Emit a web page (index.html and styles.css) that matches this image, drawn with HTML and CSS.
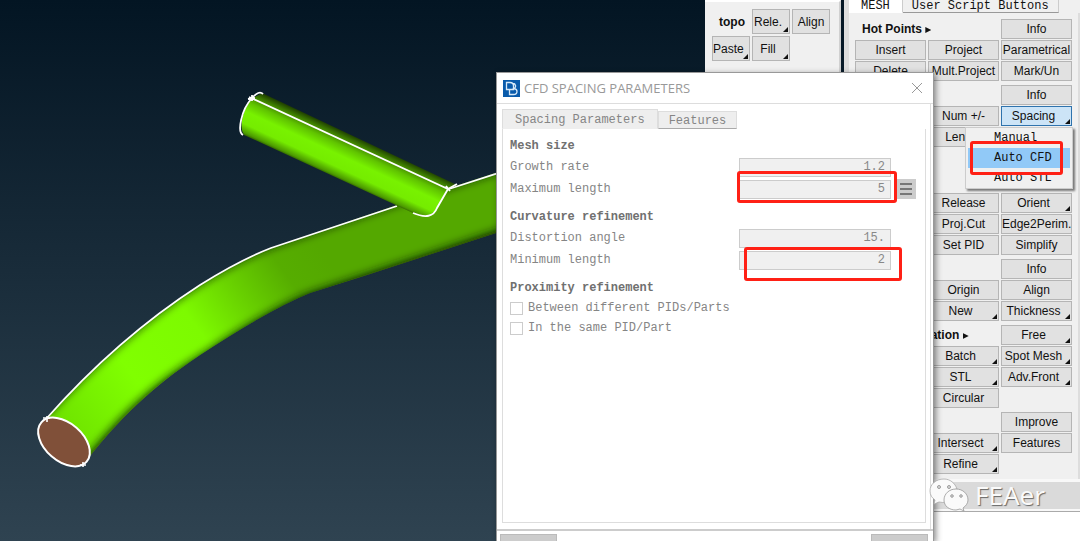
FILE: index.html
```html
<!DOCTYPE html>
<html lang="en">
<head>
<meta charset="utf-8">
<title>CFD Spacing Parameters</title>
<link rel="stylesheet" href="styles.css">
</head>
<body>
<main class="desktop">
  <svg class="model" width="700" height="541" viewBox="0 0 700 541" aria-hidden="true">
    <defs>
      <linearGradient id="tube" gradientUnits="userSpaceOnUse" x1="60" y1="440" x2="320" y2="250">
        <stop offset="0" stop-color="#6de000"/>
        <stop offset=".3" stop-color="#80ff00"/>
        <stop offset=".55" stop-color="#7dfa00"/>
        <stop offset=".72" stop-color="#68d000"/>
        <stop offset=".87" stop-color="#56ad00"/>
        <stop offset="1" stop-color="#54a800"/>
      </linearGradient>
      <linearGradient id="branch" gradientUnits="userSpaceOnUse" x1="357" y1="137" x2="337" y2="180">
        <stop offset="0" stop-color="#1c3a00"/>
        <stop offset=".12" stop-color="#3b7800"/>
        <stop offset=".3" stop-color="#60c400"/>
        <stop offset=".5" stop-color="#78f200"/>
        <stop offset=".75" stop-color="#75ec00"/>
        <stop offset=".92" stop-color="#4c9a00"/>
        <stop offset="1" stop-color="#1c3a00"/>
      </linearGradient>
      <clipPath id="tubeClip">
        <path d="M46 419C100 358 155 314 200 285Q240 260 271 248L397 205L520 165V225L496 233L367 275L310 293Q270 309 200 355C150 388 118 421 90 456Z"/>
      </clipPath>
      <filter id="soft" x="-20%" y="-20%" width="140%" height="140%"><feGaussianBlur stdDeviation="5"/></filter>
    </defs>
    <g clip-path="url(#tubeClip)">
      <path fill="url(#tube)" d="M20 150H530V480H20Z"/>
      <path d="M88 467C122 425 153 392 205 361Q273 315 314 299L369 281L540 224" fill="none" stroke="#0c1c00" stroke-width="14" filter="url(#soft)"/>
      <path d="M41 413C97 353 152 309 198 279Q238 254 269 242L395 199L540 153" fill="none" stroke="#0c1c00" stroke-width="11" filter="url(#soft)"/>
    </g>
    <path d="M46 419C100 358 155 314 200 285Q240 260 271 248L397 206M449 189L520 166" fill="none" stroke="#fff" stroke-width="1.7"/>
    <path d="M262 93L457 185L448 189L437 208Q430 220 413 213L244 135C238 126 244 106 253 98Z" fill="url(#branch)"/>
    <path d="M263 94Q259 90 252 98C241 110 237 132 243 135M249 97L448 189L457 184M448 189L437 208Q432 221 413 213M248 99L255 98M252 95L252 101M446 186L450 191" fill="none" stroke="#fff" stroke-width="1.8"/>
    <ellipse cx="64" cy="442" rx="30" ry="19" transform="rotate(41 64 442)" fill="#805039" stroke="#fff" stroke-width="2"/>
    <path d="M43 418H50M47 416V422M80 465H86M83 462V467" stroke="#fff" stroke-width="1.6"/>
  </svg>

  <aside class="topo">
    <strong class="topo-title">topo</strong>
    <button class="btn more">Rele.</button>
    <button class="btn">Align</button>
    <button class="btn more">Paste</button>
    <button class="btn more">Fill</button>
  </aside>

  <aside class="mesh">
    <nav class="tabs">
      <button class="tab active">MESH</button>
      <button class="tab">User Script Buttons</button>
    </nav>
    <div class="groups">
      <section class="group">
        <h2>Hot Points <i class="arrow"></i></h2>
        <button class="btn c3">Info</button>
        <button class="btn">Insert</button>
        <button class="btn">Project</button>
        <button class="btn">Parametrical</button>
        <button class="btn">Delete</button>
        <button class="btn">Mult.Project</button>
        <button class="btn">Mark/Un</button>
      </section>
      <section class="group four">
        <h2>Perimeters <i class="arrow"></i></h2>
        <button class="btn c3">Info</button>
        <button class="btn c2">Num +/-</button>
        <button class="btn c3 more selected">Spacing</button>
        <button class="btn c2">Length</button>
      </section>
      <section class="group four">
        <span class="spacer"></span>
        <button class="btn c2">Release</button>
        <button class="btn c3 more">Orient</button>
        <button class="btn c2">Proj.Cut</button>
        <button class="btn c3">Edge2Perim.</button>
        <button class="btn c2">Set PID</button>
        <button class="btn c3">Simplify</button>
      </section>
      <section class="group">
        <button class="btn c3">Info</button>
        <button class="btn c2">Origin</button>
        <button class="btn c3">Align</button>
        <button class="btn c2 more">New</button>
        <button class="btn c3 more">Thickness</button>
      </section>
      <section class="group four">
        <h2>Mesh Generation <i class="arrow"></i></h2>
        <button class="btn c3 more">Free</button>
        <button class="btn c2 more">Batch</button>
        <button class="btn c3 more">Spot Mesh</button>
        <button class="btn c2 more">STL</button>
        <button class="btn c3 more">Adv.Front</button>
        <button class="btn c2">Circular</button>
      </section>
      <section class="group">
        <h2>Shell Mesh <i class="arrow"></i></h2>
        <button class="btn c3">Improve</button>
        <button class="btn c2 more">Intersect</button>
        <button class="btn c3">Features</button>
        <button class="btn c2 more">Refine</button>
      </section>
    </div>
    <div class="statusbar"></div>
    <div class="log"></div>
  </aside>

  <section class="dialog">
    <header class="dialog-head">
      <svg width="17" height="17" viewBox="0 0 17 17" aria-hidden="true">
        <path fill="#0a5bab" d="M0 0H17V17H0Z"/>
        <path d="M3.500 2.500H7Q10.500 2.500 10.500 6V9.500H3.500ZM6.500 9.500V14.500H10.500Q14 14.500 14 11.500Q14 9 11 8.500Q13 7.500 12.500 5.500Q12 3.500 10 3.500" fill="none" stroke="#d8e9f8" stroke-width="1.300"/>
      </svg>
      <h1>CFD SPACING PARAMETERS</h1>
      <button class="close" aria-label="Close">
        <svg width="12" height="12" viewBox="0 0 12 12"><path d="M1 1L11 11M11 1L1 11" stroke="#999" fill="none"/></svg>
      </button>
    </header>
    <div class="dialog-body">
      <nav class="dialog-tabs">
        <button class="dtab active">Spacing Parameters</button>
        <button class="dtab">Features</button>
      </nav>
      <form class="form">
        <h3>Mesh size</h3>
        <div class="row"><label for="growth">Growth rate</label><input id="growth" type="text" value="1.2"></div>
        <div class="row"><label for="maxlen">Maximum length</label><input id="maxlen" type="text" value="5">
          <button type="button" class="list" aria-label="Options"><svg width="14" height="14" viewBox="0 0 14 14"><path d="M1 2H13M1 7H13M1 12H13" stroke="#777" stroke-width="2"/></svg></button>
        </div>
        <h3>Curvature refinement</h3>
        <div class="row"><label for="angle">Distortion angle</label><input id="angle" type="text" value="15."></div>
        <div class="row"><label for="minlen">Minimum length</label><input id="minlen" type="text" value="2"></div>
        <h3>Proximity refinement</h3>
        <label class="check"><input type="checkbox">Between different PIDs/Parts</label>
        <label class="check"><input type="checkbox">In the same PID/Part</label>
      </form>
    </div>
    <footer class="dialog-foot">
      <button class="foot-btn" aria-label="OK"></button>
      <button class="foot-btn" aria-label="Cancel"></button>
    </footer>
  </section>

  <div class="menu" role="menu">
    <button role="menuitem">Manual</button>
    <button role="menuitem" class="current">Auto CFD</button>
    <button role="menuitem">Auto STL</button>
  </div>

  <div class="mark mark-max"></div>
  <div class="mark mark-min"></div>
  <div class="mark mark-menu"></div>

  <div class="watermark">
    <svg width="40" height="34" viewBox="0 0 40 34" aria-hidden="true">
      <path d="M15 1C7 1 1 6 1 13C1 17 3 20 6 22L5 26L10 24Q14 25 17 24Q15 12 28 11C26 5 21 1 15 1Z" fill="#fafafa" stroke="#aaa" stroke-width=".8"/>
      <path d="M27 11C20 11 15 16 15 22C15 28 20 32 27 32L31 31L35 33L34 30C37 28 39 25 39 22C39 16 34 11 27 11Z" fill="#fafafa" stroke="#999" stroke-width=".8"/>
      <g fill="#ddd" stroke="#888" stroke-width=".8"><circle cx="10" cy="9" r="1.500"/><circle cx="20" cy="9" r="1.500"/><circle cx="23" cy="18" r="1.300"/><circle cx="32" cy="18" r="1.300"/></g>
    </svg>
    <span>FEAer</span>
  </div>
</main>
</body>
</html>
```
FILE: styles.css
```css
* { box-sizing: border-box; }

body {
  margin: 0;
  font-family: "Liberation Sans", Arial, sans-serif;
  font-size: 12px;
  color: #111;
}

button { font: inherit; color: inherit; padding: 0; }
h1, h2, h3 { margin: 0; }

.desktop {
  position: relative;
  display: flex;
  justify-content: flex-end;
  gap: 3px;
  height: 100vh;
  overflow: hidden;
  background: linear-gradient(#031523, #2f4351);
}

.model { position: absolute; left: 0; top: 0; }

/* tool panels */
.topo {
  position: relative;
  display: grid;
  grid-template-columns: repeat(3, 38px);
  grid-auto-rows: 25px;
  gap: 2px;
  align-content: start;
  width: 136px;
  padding: 7px;
  background: #f0f0f0;
  border-top: 2px solid #fff;
  border-right: 2px solid #d0d0d0;
}

.topo-title { align-self: center; justify-self: end; padding-right: 5px; }

.mesh {
  position: relative;
  display: flex;
  flex-direction: column;
  width: 236px;
  background: #f0f0f0;
  border-left: 5px solid #ddd;
}

.btn {
  position: relative;
  overflow: hidden;
  background: #e1e1e1;
  border: 1px solid #b5b5b5;
  white-space: nowrap;
  line-height: 16px;
}

.btn.more::after {
  content: "";
  position: absolute;
  right: 1px;
  bottom: 1px;
  width: 5px;
  height: 5px;
  background: #111;
  clip-path: polygon(100% 0, 100% 100%, 0 100%);
}

.btn.more { padding-right: 6px; }

.btn.selected { background: #cce4f7; border-color: #2f73ad; }

.tabs {
  display: flex;
  height: 13px;
  font-family: "Liberation Mono", monospace;
}

.tab {
  height: 13px;
  padding: 0 9px;
  border: 0;
  border-right: 1px solid #ccc;
  border-bottom: 1px solid #999;
  background: #f0f0f0;
  line-height: 12px;
}

.tab.active { background: #fff; border-bottom-color: #fff; padding: 0 12px; }

.groups {
  display: flex;
  flex-direction: column;
  gap: 4px;
  padding: 6px 6px 5px 6px;
  border-right: 2px solid #ddd;
}

.group {
  display: grid;
  grid-template-columns: repeat(3, 1fr);
  grid-template-rows: repeat(3, 20px);
  gap: 1px 2px;
}

.group.four { grid-template-rows: repeat(4, 20px); }
.c2 { grid-column: 2; }
.c3 { grid-column: 3; }
.spacer { grid-column: 1 / 4; }

.group h2 {
  grid-column: 1 / 3;
  grid-row: 1;
  padding-left: 7px;
  font-size: 12px;
  line-height: 20px;
}

.arrow {
  display: inline-block;
  width: 6px;
  height: 6px;
  background: #111;
  clip-path: polygon(0 0, 100% 50%, 0 100%);
}

.statusbar {
  height: 32px;
  background: #dadada;
  border-top: 3px solid #f8f8f8;
  border-bottom: 2px solid #f8f8f8;
}

.log { flex: 1; background: #fff; border-top: 1px solid #aaa; }

/* dialog window */
.dialog {
  position: absolute;
  left: 496px;
  top: 72px;
  bottom: 0;
  display: flex;
  flex-direction: column;
  width: 438px;
  background: #fff;
  border: 1px solid #999;
  border-bottom: 0;
  box-shadow: 2px 2px 6px rgba(0, 0, 0, .45);
  font-family: "Liberation Mono", monospace;
  color: #858585;
}

.dialog-head {
  display: flex;
  align-items: center;
  gap: 4px;
  height: 31px;
  padding: 0 10px 0 6px;
  border-bottom: 1px solid #ddd;
}

.dialog-head h1 {
  flex: 1;
  font: 13px "Open Sans", "Noto Sans", sans-serif;
  color: #999;
}

.close { display: flex; border: 0; background: none; }

.dialog-body {
  flex: 1;
  display: flex;
  flex-direction: column;
  margin-right: 2px;
  padding: 5px 4px 6px 5px;
  border-right: 1px solid #ddd;
}

.dialog-tabs { display: flex; align-items: flex-end; height: 20px; }

.dtab {
  height: 18px;
  padding: 1px 10px 0;
  background: #eee;
  border: 1px solid #ddd;
  border-bottom-color: #aaa;
}

.dtab.active { height: 20px; padding: 2px 12px 0; border-bottom-color: #eee; }

.form {
  flex: 1;
  display: flex;
  flex-direction: column;
  padding: 7px 9px 0 7px;
  border: 1px solid #ddd;
  border-top: 0;
}

.form h3 { font-size: 12px; line-height: 20px; color: #707070; }
.form h3:not(:first-child) { margin-top: 7px; }

.row { display: flex; align-items: center; gap: 5px; height: 22px; }
.row label { flex: 1; }

.row input {
  width: 152px;
  height: 19px;
  margin: 0;
  margin-right: 25px;
  padding: 0 5px;
  border: 1px solid #ccc;
  background: #f0f0f0;
  font: inherit;
  color: #888;
  text-align: right;
}

.row input:not(:last-child) { margin-right: 0; }

.list {
  display: grid;
  place-items: center;
  width: 20px;
  height: 20px;
  border: 0;
  background: #ccc;
}

.check { display: flex; align-items: center; gap: 5px; height: 20px; }

.check input {
  appearance: none;
  width: 13px;
  height: 13px;
  margin: 0;
  border: 1px solid #ccc;
  background: #fff;
}

.dialog-foot {
  display: flex;
  justify-content: space-between;
  height: 12px;
  padding: 3px 5px 0 3px;
  border-top: 2px solid #ccc;
}

.foot-btn { width: 57px; border: 1px solid #bbb; border-bottom: 0; background: #ccc; }

/* spacing menu */
.menu {
  position: absolute;
  right: 7px;
  top: 127px;
  display: flex;
  flex-direction: column;
  width: 108px;
  padding: 0 2px;
  background: #f0f0f0;
  border: 1px solid #ccc;
  box-shadow: 2px 2px 2px rgba(0, 0, 0, .5);
  font-family: "Liberation Mono", monospace;
}

.menu button {
  height: 20px;
  padding-left: 26px;
  border: 0;
  background: none;
  text-align: left;
}

.menu .current { background: #91c9f7; }

/* highlight frames */
.mark { position: absolute; border: 3px solid #ff2015; border-radius: 3px; }
.mark-max { left: 737px; top: 171px; width: 160px; height: 32px; }
.mark-min { left: 744px; top: 247px; width: 158px; height: 34px; }
.mark-menu { right: 17px; top: 141px; width: 93px; height: 34px; }

.watermark {
  position: absolute;
  right: 35px;
  bottom: 29px;
  display: flex;
  align-items: center;
  gap: 6px;
  font: 26px "Noto Sans", sans-serif;
  line-height: 32px;
  color: #fafafa;
  text-shadow: 1px 1px 1px #666;
}
```
